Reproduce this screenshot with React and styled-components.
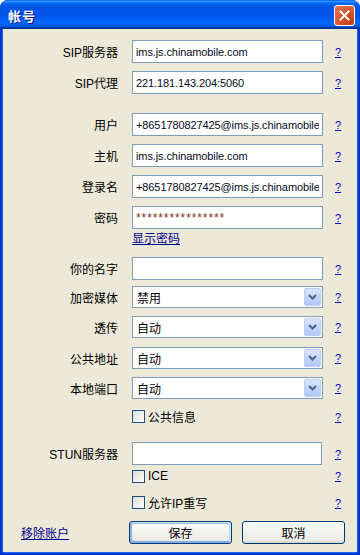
import React from 'react';
import styled, { createGlobalStyle } from 'styled-components';

const Global = createGlobalStyle`
  html, body { margin:0; padding:0; background:#fff; }
  body { font-family:"Liberation Sans","Noto Sans CJK SC",sans-serif; }
`;

const Window = styled.div`
  width:360px;
  height:555px;
  display:flex;
  flex-direction:column;
  background:#0831d9;
  border-radius:8px 8px 0 0;
  overflow:hidden;
`;

const TitleBar = styled.div`
  height:29px;
  flex:none;
  display:flex;
  align-items:center;
  justify-content:space-between;
  padding:0 5px 0 8px;
  background:linear-gradient(180deg,#0058ee 0%,#3593ff 4%,#288eff 6%,#127dff 8%,#036ffc 10%,#0262ee 14%,#0057e5 20%,#0054e3 24%,#0055eb 56%,#005bf5 66%,#026afe 76%,#0062ef 86%,#0052d6 92%,#0040ab 94%,#003092 100%);
`;

const Title = styled.span`
  color:#fff;
  font-family:"Noto Sans CJK SC",sans-serif;
  font-weight:700;
  font-size:13px;
  letter-spacing:1px;
  text-shadow:1px 1px 0 #0f1089;
  margin-top:1px;
`;

const CloseBtn = styled.div`
  width:21px;
  height:21px;
  box-sizing:border-box;
  border:1px solid #fff;
  border-radius:3px;
  background:radial-gradient(circle at 80% 85%,#c43a16 0%,#d8532c 45%,#e37452 100%);
  display:flex;
  align-items:center;
  justify-content:center;
  margin-top:2px;
`;

const Body = styled.div`
  flex:1;
  margin:0 3px 3px 3px;
  background:#ece9d8;
  display:flex;
  flex-direction:column;
  box-shadow:-1px 0 0 #166aee, 1px 0 0 #166aee, 0 1px 0 #166aee;
`;

const Row = styled.div`
  display:grid;
  grid-template-columns:115px 191px auto;
  column-gap:14px;
  align-items:center;
  height:${p => p.$h || 23}px;
  margin-top:${p => p.$mt || 0}px;
  & > :nth-child(3) { margin-left:-2px; }
`;

const Label = styled.span`
  text-align:right;
  font-size:12px;
  color:#000;
  white-space:nowrap;
`;

const TextBox = styled.input`
  box-sizing:border-box;
  width:${p => p.$w || 191}px;
  height:23px;
  margin:0;
  border:1px solid #7f9db9;
  background:#fff;
  padding:0 3px;
  font-family:"Liberation Sans",sans-serif;
  font-size:${p => p.$secret ? '12px' : '11px'};
  color:${p => p.$secret ? '#7a3418' : '#0a0a1e'};
  letter-spacing:${p => p.$secret ? '0.9px' : '-0.1px'};
  outline:none;
`;

const Help = styled.a`
  font-family:"Liberation Sans",sans-serif;
  font-size:11px;
  color:#0000cc;
  text-decoration:underline;
  cursor:pointer;
`;

const Link = styled.a`
  font-family:"Noto Sans CJK SC",sans-serif;
  font-size:12px;
  color:#00008b;
  text-decoration:underline;
  cursor:pointer;
`;

const Combo = styled.div`
  box-sizing:border-box;
  height:22px;
  border:1px solid #7f9db9;
  background:#fff;
  display:flex;
  align-items:center;
  justify-content:space-between;
  padding:0 1px 0 4px;
  font-size:12px;
  color:#000;
`;

const DropBtn = styled.div`
  width:17px;
  height:18px;
  box-sizing:border-box;
  border:1px solid #bccbf1;
  border-radius:2px;
  background:linear-gradient(180deg,#dbe6fd 0%,#c4d5fb 50%,#b4c8f6 100%);
  display:flex;
  align-items:center;
  justify-content:center;
`;

const CheckLine = styled.label`
  display:flex;
  align-items:center;
  gap:3px;
  font-size:12px;
  color:#000;
  white-space:nowrap;
`;

const Box = styled.span`
  width:13px;
  height:13px;
  box-sizing:border-box;
  border:1px solid #1c5180;
  background:linear-gradient(135deg,#dcdcd7,#fff);
  flex:none;
`;

const Footer = styled.div`
  display:flex;
  align-items:center;
  margin-top:11px;
  height:23px;
`;

const FooterLink = styled.div`
  width:126px;
  padding-left:18px;
  box-sizing:border-box;
`;

const Buttons = styled.div`
  display:flex;
  gap:10px;
`;

const Button = styled.button`
  width:103px;
  height:23px;
  margin:0;
  padding:0;
  border:1px solid #003c74;
  border-radius:3px;
  background:linear-gradient(180deg,#fff 0%,#f4f3ee 40%,#ecebe6 86%,#d6d0c5 100%);
  font-family:"Noto Sans CJK SC",sans-serif;
  font-size:12px;
  color:#000;
  box-shadow:${p => p.$default
    ? 'inset -1px 1px #cee7ff, inset 1px 2px #98b8ea, inset -2px 2px #bcd4f6, inset 1px -1px #89ade4, inset 2px -2px #89ade4'
    : 'none'};
`;

const Chevron = () => (
  <svg width="9" height="6" viewBox="0 0 9 6">
    <path d="M1 1 L4.5 4.5 L8 1" fill="none" stroke="#4d6185" strokeWidth="2" />
  </svg>
);

const Field = ({ label, value, mt, secret }) => (
  <Row $mt={mt}>
    <Label>{label}</Label>
    <TextBox readOnly value={value} $secret={secret} />
    <Help>?</Help>
  </Row>
);

const Select = ({ label, value, mt }) => (
  <Row $mt={mt} $h={22}>
    <Label>{label}</Label>
    <Combo>
      <span>{value}</span>
      <DropBtn><Chevron /></DropBtn>
    </Combo>
    <Help>?</Help>
  </Row>
);

const Check = ({ text, mt, h }) => (
  <Row $mt={mt} $h={h}>
    <span />
    <CheckLine><Box />{text}</CheckLine>
    <Help>?</Help>
  </Row>
);

export default function App() {
  return (
    <>
      <Global />
      <Window>
        <TitleBar>
          <Title>帐号</Title>
          <CloseBtn>
            <svg width="11" height="11" viewBox="0 0 11 11">
              <path d="M1.5 1.5 L9.5 9.5 M9.5 1.5 L1.5 9.5" stroke="#fff" strokeWidth="2" strokeLinecap="square" />
            </svg>
          </CloseBtn>
        </TitleBar>
        <Body>
          <Field label="SIP服务器" value="ims.js.chinamobile.com" mt={11} />
          <Field label="SIP代理" value="221.181.143.204:5060" mt={8} />
          <Field label="用户" value="+8651780827425@ims.js.chinamobile.com" mt={19} />
          <Field label="主机" value="ims.js.chinamobile.com" mt={8} />
          <Field label="登录名" value="+8651780827425@ims.js.chinamobile.com" mt={8} />
          <Field label="密码" value="****************" mt={8} secret />
          <Row $h={16}>
            <span />
            <div><Link>显示密码</Link></div>
          </Row>
          <Field label="你的名字" value="" mt={12} />
          <Select label="加密媒体" value="禁用" mt={6} />
          <Select label="透传" value="自动" mt={8} />
          <Select label="公共地址" value="自动" mt={9} />
          <Select label="本地端口" value="自动" mt={8} />
          <Check text="公共信息" mt={6} />
          <Row $mt={14}>
            <Label>STUN服务器</Label>
            <TextBox readOnly value="" $w={190} />
            <Help>?</Help>
          </Row>
          <Check text="ICE" mt={3} h={16} />
          <Check text="允许IP重写" mt={10} h={16} />
          <Footer>
            <FooterLink><Link>移除账户</Link></FooterLink>
            <Buttons>
              <Button $default>保存</Button>
              <Button>取消</Button>
            </Buttons>
          </Footer>
        </Body>
      </Window>
    </>
  );
}
